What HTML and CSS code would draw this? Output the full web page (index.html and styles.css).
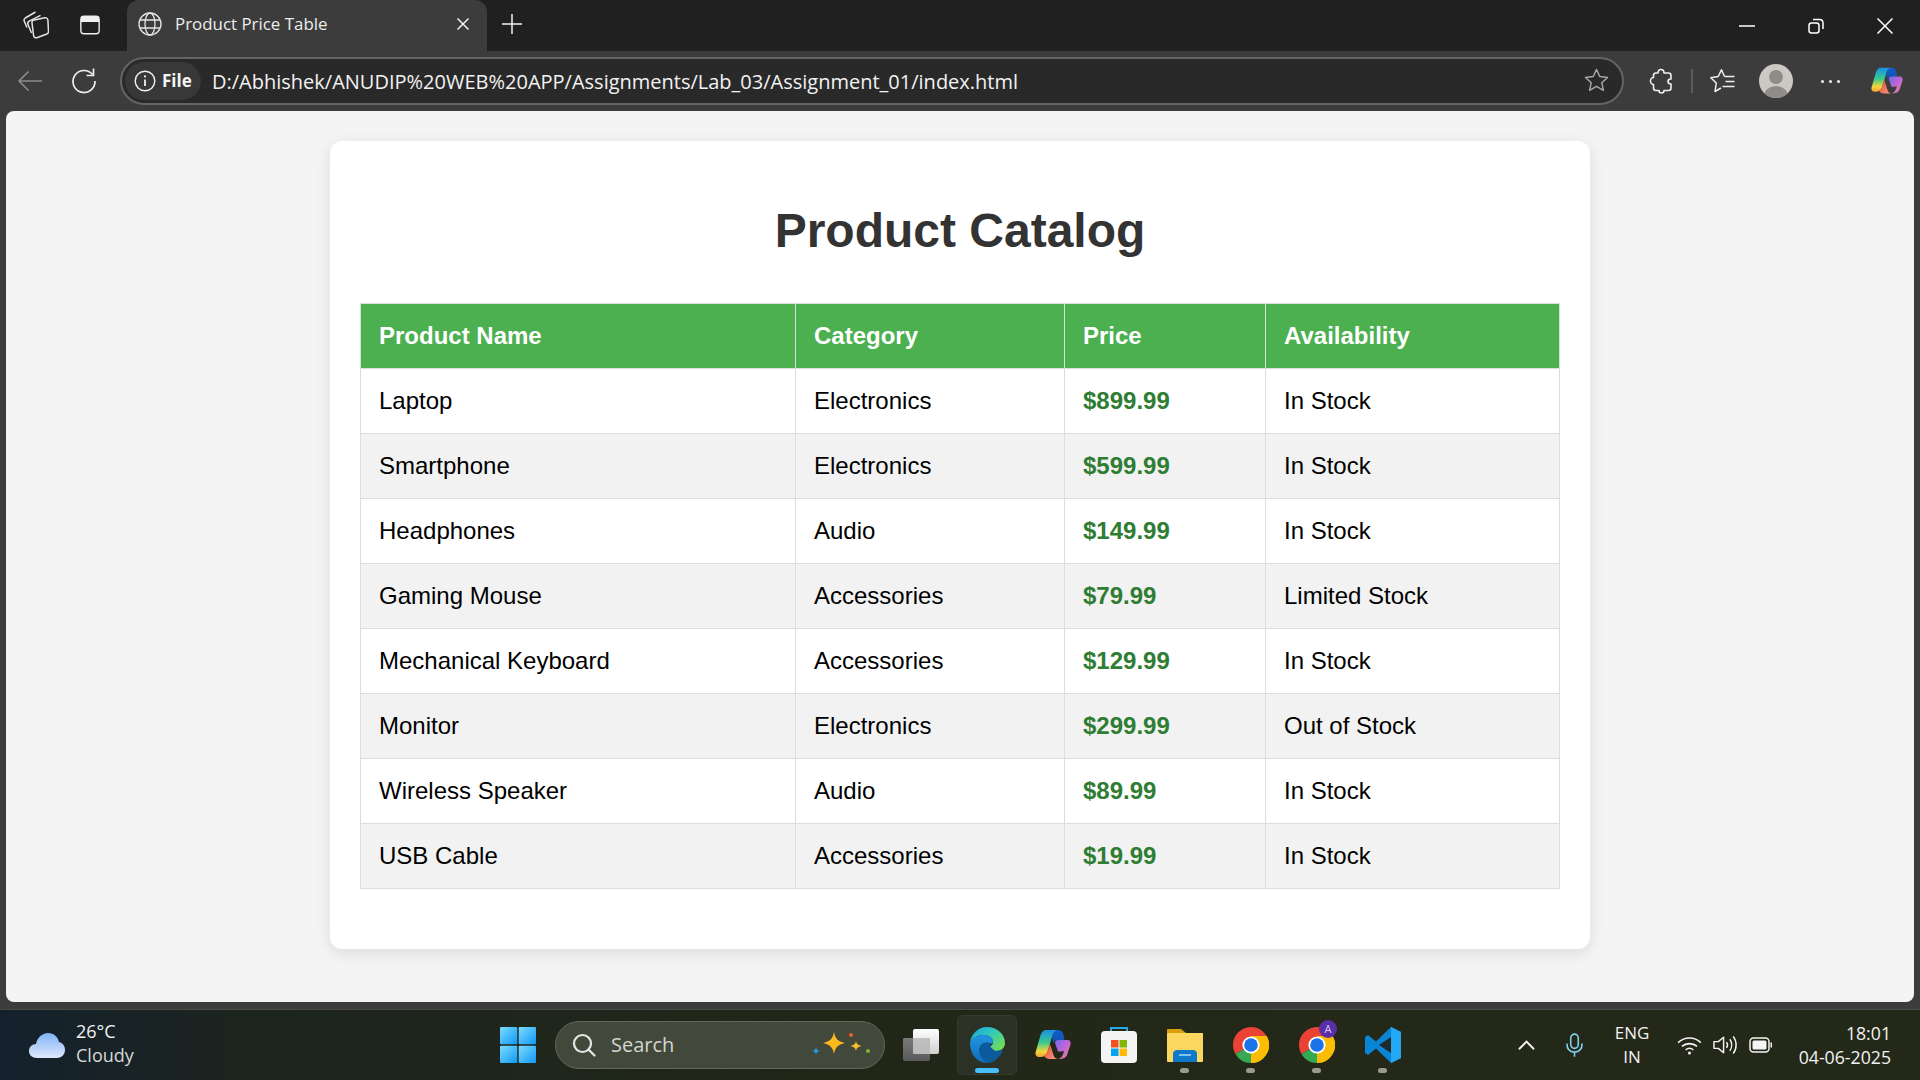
FILE: index.html
```html
<!DOCTYPE html>
<html lang="en">
<head>
<meta charset="utf-8">
<title>Product Price Table</title>
<link rel="stylesheet" href="styles.css">
</head>
<body>
<svg class="defs" width="0" height="0" aria-hidden="true">
  <defs>
    <linearGradient id="copA" x1="0" y1="0" x2="0" y2="1"><stop offset="0" stop-color="#1b8ee8"/><stop offset=".45" stop-color="#35c98f"/><stop offset=".8" stop-color="#f4d53c"/><stop offset="1" stop-color="#f0a030"/></linearGradient>
    <linearGradient id="copB" x1="0" y1="0" x2="1" y2="1"><stop offset="0" stop-color="#6f6be8"/><stop offset=".5" stop-color="#c264d8"/><stop offset="1" stop-color="#f48a8a"/></linearGradient>
    <linearGradient id="copC" x1="0" y1="0" x2="0" y2="1"><stop offset="0" stop-color="#0f5fc8"/><stop offset="1" stop-color="#1450b0"/></linearGradient>
    <linearGradient id="copD" x1="0" y1="0" x2="1" y2="1"><stop offset="0" stop-color="#e8452e"/><stop offset="1" stop-color="#f6a08a"/></linearGradient>
    <linearGradient id="edgeA" x1="0" y1="0" x2="1" y2=".7"><stop offset="0" stop-color="#1aa0dc"/><stop offset=".5" stop-color="#2fc8c0"/><stop offset="1" stop-color="#6fdc5c"/></linearGradient>
    <linearGradient id="edgeB" x1="0" y1="0" x2="0" y2="1"><stop offset="0" stop-color="#2196e0"/><stop offset="1" stop-color="#0f6cbc"/></linearGradient>
    <linearGradient id="winA" x1="0" y1="0" x2="1" y2="1"><stop offset="0" stop-color="#7cdcfc"/><stop offset="1" stop-color="#1098f8"/></linearGradient>
    <linearGradient id="weatherA" x1="0" y1="0" x2="0" y2="1"><stop offset="0" stop-color="#7fb4f6"/><stop offset=".6" stop-color="#b9d2fa"/><stop offset="1" stop-color="#dfe9fb"/></linearGradient>
    <linearGradient id="taskA" x1="0" y1="0" x2="0" y2="1"><stop offset="0" stop-color="#ffffff"/><stop offset="1" stop-color="#d0d0d0"/></linearGradient>
    <linearGradient id="taskB" x1="0" y1="0" x2="0" y2="1"><stop offset="0" stop-color="#7a7a7a"/><stop offset="1" stop-color="#5a5a5a"/></linearGradient>
    <symbol id="copilot" viewBox="0 0 36 36">
      <path d="M11 3h12c-3 1-5 3-6 7l-4 13c-1 4-3 7-7 7H4c-2.500 0-4-2-3.500-4.500L5 10c1-4 3-7 6-7z" fill="url(#copA)"/>
      <path d="M23 3c3 0 5 2 5.500 5l1 5h-7c-2 0-3 1-4 3l-1.500-6c1-4 3-7 6-7z" fill="url(#copC)"/>
      <path d="M13 23l2-6 3.500 11c.7 2.500 2.500 4 5 4H15c-3 0-6-2-6-4 2 0 3-2 4-5z" fill="url(#copD)"/>
      <path d="M23 13h9.500c2.500 0 3.500 2 3 4.500l-3 9c-1 4-4 5.500-8 5.500h-1c3-1 4-3 5-6l.5-2-3 .5h-3L20 16c.3-2 1-3 3-3z" fill="url(#copB)"/>
    </symbol>
    <symbol id="chrome" viewBox="-18 -18 36 36">
      <path d="M0 0L-15.600 9A18 18 0 0 1 15.600 -9Z" fill="#ea4335"/>
      <path d="M0 0L15.600 -9A18 18 0 0 1 0 18Z" fill="#fbbc04"/>
      <path d="M0 0L0 18A18 18 0 0 1 -15.600 9Z" fill="#34a853"/>
      <path d="M0 -9H15.600A18 18 0 0 1 0 18L7.800 4.500Z" fill="#fbbc04"/>
      <circle r="8.600" fill="#fff"/><circle r="6.800" fill="#1a73e8"/>
    </symbol>
  </defs>
</svg>
<div class="app">
  <header class="titlebar">
    <div class="title-left">
      <svg class="ico ico-workspaces" viewBox="0 0 26 28" fill="none" stroke="#e4e4e4" stroke-width="1.500" stroke-linejoin="round"><path d="M10.200 9.200l11.500-2.400c1.700-.3 3 .7 3.200 2.300l.6 11c.1 1.500-.8 2.800-2.300 3.200l-9.400 3.400c-1.700.5-3-.5-3.200-2.100L9 11.800c-.1-1.300.3-2.300 1.200-2.600z"/><path d="M8.500 22L5 13.500c-.6-1.400-.1-2.600 1.200-3.300L17.500 4.300"/><path d="M4 16.500L1.300 10.300c-.6-1.400-.2-2.500 1-3.300L12.500 1"/></svg>
      <svg class="ico ico-tabs" viewBox="0 0 24 24" fill="none" stroke="#f0f0f0" stroke-width="1.500"><rect x="2" y="2.500" width="20" height="19" rx="3.500"/><path d="M2 8h20M3 3.500h18V8H3z" fill="#f0f0f0"/></svg>
    </div>
    <div class="tab">
      <svg class="ico ico-globe" viewBox="0 0 24 24" fill="none" stroke="#e4e4e4" stroke-width="1.300"><circle cx="12" cy="12" r="11"/><ellipse cx="12" cy="12" rx="5" ry="11"/><path d="M1.800 8h20.400M1.800 16h20.400"/></svg>
      <span class="tab-title">Product Price Table</span>
      <svg class="ico ico-close" viewBox="0 0 14 14" fill="none" stroke="#f0f0f0" stroke-width="1.500"><path d="M1.500 1.500l11 11M12.500 1.500l-11 11"/></svg>
    </div>
    <svg class="ico ico-plus" viewBox="0 0 22 22" fill="none" stroke="#f0f0f0" stroke-width="1.500"><path d="M11 1v20M1 11h20"/></svg>
    <div class="win-controls">
      <svg class="ico win-ico" viewBox="0 0 16 16" fill="none" stroke="#fff" stroke-width="1.500"><path d="M0 8h16"/></svg>
      <svg class="ico win-ico" viewBox="0 0 16 16" fill="none" stroke="#fff" stroke-width="1.500"><rect x="1" y="5" width="10" height="10" rx="2.500"/><path d="M5 1.500h6.500c2 0 3.500 1.500 3.500 3.500v6"/></svg>
      <svg class="ico win-ico" viewBox="0 0 16 16" fill="none" stroke="#fff" stroke-width="1.500"><path d="M.5.500l15 15M15.500.500l-15 15"/></svg>
    </div>
  </header>

  <nav class="toolbar">
    <svg class="ico ico-back" viewBox="0 0 26 22" fill="none" stroke="#8c8c8c" stroke-width="1.600"><path d="M25 11H2M11.500 1.500L2 11l9.500 9.500"/></svg>
    <svg class="ico ico-reload" viewBox="0 0 26 26" fill="none" stroke="#efefef" stroke-width="1.700"><path d="M21.500 6.500A11 11 0 1 0 24 13"/><path d="M22.500 .5v7h-7"/></svg>
    <div class="omnibox">
      <div class="site-pill">
        <svg class="ico ico-info" viewBox="0 0 22 22" fill="none" stroke="#f0f0f0" stroke-width="1.400"><circle cx="11" cy="11" r="9.800"/><path d="M11 9.500v6.500" stroke-width="1.800"/><circle cx="11" cy="6.400" r="1.100" fill="#f0f0f0" stroke="none"/></svg>
        <span class="pill-label">File</span>
      </div>
      <span class="url">D:/Abhishek/ANUDIP%20WEB%20APP/Assignments/Lab_03/Assignment_01/index.html</span>
      <svg class="ico ico-star" viewBox="0 0 26 26" fill="none" stroke="#a8a8a8" stroke-width="1.500" stroke-linejoin="round"><path d="M13 1.500l3.400 7.400 8.100.9-6 5.500 1.700 8-7.200-4.100-7.200 4.100 1.700-8-6-5.500 8.100-.9z"/></svg>
    </div>
    <svg class="ico ico-ext" viewBox="0 0 24 26" fill="none" stroke="#f0f0f0" stroke-width="1.600" stroke-linejoin="round"><path d="M9 5c0-2 1-3.500 3-3.500S15 3 15 5h4.500c1.500 0 2.500 1 2.500 2.500V11c-2 0-3 1-3 2.500s1 2.500 3 2.500v4c0 1.500-1 2.500-2.500 2.500H15c0 1.500-1 2.500-2.500 2.500S10 24 10 22.500H7c-1.500 0-2.500-1-2.500-2.500v-3.500C3 16.500 1.500 15 1.500 13S3 9.500 4.500 9.500V7.500C4.500 6 5.500 5 7 5z"/></svg>
    <span class="tool-divider"></span>
    <svg class="ico ico-favs" viewBox="0 0 25 25" fill="none" stroke="#f0f0f0" stroke-width="1.500" stroke-linejoin="round"><path d="M14.500 7.500L11.500.8 8.200 7.500.8 8.700 6.300 14 5 22.500 11 19"/><path d="M14.500 7.500H24.500M15.500 12.500H24.500M12.500 17.500H24.500"/></svg>
    <div class="avatar"><span class="avatar-head"></span><span class="avatar-body"></span></div>
    <span class="more"><i></i><i></i><i></i></span>
    <svg class="ico ico-copilot"><use href="#copilot"/></svg>
  </nav>

  <main class="viewport">
    <section class="card">
      <h1 class="card-title">Product Catalog</h1>
      <table class="catalog">
        <colgroup><col class="col-name"><col class="col-cat"><col class="col-price"><col class="col-avail"></colgroup>
        <thead>
          <tr><th>Product Name</th><th>Category</th><th>Price</th><th>Availability</th></tr>
        </thead>
        <tbody>
          <tr><td>Laptop</td><td>Electronics</td><td class="price">$899.99</td><td>In Stock</td></tr>
          <tr><td>Smartphone</td><td>Electronics</td><td class="price">$599.99</td><td>In Stock</td></tr>
          <tr><td>Headphones</td><td>Audio</td><td class="price">$149.99</td><td>In Stock</td></tr>
          <tr><td>Gaming Mouse</td><td>Accessories</td><td class="price">$79.99</td><td>Limited Stock</td></tr>
          <tr><td>Mechanical Keyboard</td><td>Accessories</td><td class="price">$129.99</td><td>In Stock</td></tr>
          <tr><td>Monitor</td><td>Electronics</td><td class="price">$299.99</td><td>Out of Stock</td></tr>
          <tr><td>Wireless Speaker</td><td>Audio</td><td class="price">$89.99</td><td>In Stock</td></tr>
          <tr><td>USB Cable</td><td>Accessories</td><td class="price">$19.99</td><td>In Stock</td></tr>
        </tbody>
      </table>
    </section>
  </main>

  <footer class="taskbar">
    <div class="weather">
      <svg class="ico ico-weather" viewBox="0 0 38 28"><path d="M9 27C4 27 1 24 1 20s3-7 7-7c1-6 6-11 12-11s10 4 11 9c4 1 6 4 6 8s-3 8-8 8z" fill="url(#weatherA)"/></svg>
      <div class="weather-text"><span class="temp">26°C</span><span class="cond">Cloudy</span></div>
    </div>
    <svg class="ico ico-win" viewBox="0 0 36 36"><rect x="0" y="0" width="17.300" height="17.300" rx="1" fill="url(#winA)"/><rect x="18.700" y="0" width="17.300" height="17.300" rx="1" fill="url(#winA)"/><rect x="0" y="18.700" width="17.300" height="17.300" rx="1" fill="url(#winA)"/><rect x="18.700" y="18.700" width="17.300" height="17.300" rx="1" fill="url(#winA)"/></svg>
    <div class="search">
      <svg class="ico ico-search" viewBox="0 0 24 24" fill="none" stroke="#e8e8e8" stroke-width="2.200"><circle cx="10.500" cy="10.500" r="8.500"/><path d="M16.500 16.500l6 6" stroke-linecap="round"/></svg>
      <span class="search-label">Search</span>
      <svg class="ico ico-spark" viewBox="0 0 60 30"><path d="M24 2c1.500 7 3.500 9 11 11-7.500 2-9.500 4-11 11-1.500-7-3.500-9-11-11 7.500-2 9.500-4 11-11z" fill="#fbb91f"/><path d="M46 11c.7 3 1.500 4 5.500 5-4 1-4.800 2-5.500 5-.7-3-1.500-4-5.500-5 4-1 4.800-2 5.500-5z" fill="#fbc02d"/><path d="M6 17c.5 2.500 1 3 3.500 4-2.500 1-3 1.500-3.500 4-.5-2.500-1-3-3.500-4 2.500-1 3-1.500 3.500-4z" fill="#1ea0e8"/><circle cx="41" cy="5" r="2" fill="#e8622a"/><circle cx="58" cy="21" r="2" fill="#7cb82f"/></svg>
    </div>
    <div class="pinned">
      <div class="pin">
        <svg class="app-ico" viewBox="0 0 36 36"><rect x="10" y="2" width="26" height="25" rx="2" fill="url(#taskA)"/><path d="M1 11h9v16h17v5a2 2 0 0 1-2 2H2a2 2 0 0 1-2-2V12z" fill="url(#taskB)"/><rect x="10" y="11" width="17" height="16" fill="#b4b4b4" opacity=".8"/></svg>
      </div>
      <div class="pin pin-active">
        <svg class="app-ico" viewBox="0 0 36 36"><path d="M1 16C2 7 9 0 18 0c10 0 18 7 18 16 0 5-4 8-9 8-4 0-6-1-6-3 0-3 3-2 3-6 0-4-4-7-9-7C8 8 3 11 1 16z" fill="url(#edgeA)"/><path d="M1 16c2-5 7-8 14-8 5 0 9 3 9 7 0 1-1 1-2 2-3-2-9-2-11 3-2 6 2 13 9 16-10 1-19-7-19-20z" fill="url(#edgeB)"/><path d="M11 20c2-5 8-5 11-3-2 1-1 4 5 7 3 0 6-1 7-2-2 8-9 14-16 14-5-3-9-10-7-16z" fill="#0c5a9e"/></svg>
        <span class="pin-bar"></span>
      </div>
      <div class="pin"><svg class="app-ico"><use href="#copilot"/></svg></div>
      <div class="pin">
        <svg class="app-ico" viewBox="0 0 36 36"><path d="M10 5V1h16v4" fill="none" stroke="#2aa8e8" stroke-width="2"/><rect x="0" y="4" width="36" height="32" rx="4" fill="#f4f4f4"/><rect x="10" y="13" width="7.500" height="7.500" fill="#f25022"/><rect x="18.500" y="13" width="7.500" height="7.500" fill="#7fba00"/><rect x="10" y="21.500" width="7.500" height="7.500" fill="#00a4ef"/><rect x="18.500" y="21.500" width="7.500" height="7.500" fill="#ffb900"/></svg>
      </div>
      <div class="pin">
        <svg class="app-ico" viewBox="0 0 36 36"><path d="M0 3a1 1 0 0 1 1-1h13l5 4h16a1 1 0 0 1 1 1v10H0z" fill="#d9a00c"/><rect x="0" y="6" width="36" height="29" rx="1" fill="#fcd75f"/><path d="M6 35v-8c0-3 2-4 4-4h16c2 0 4 1 4 4v8z" fill="#0f78c8"/><rect x="12" y="27" width="12" height="2" fill="#7cc4f4"/></svg>
        <span class="pin-dot"></span>
      </div>
      <div class="pin"><svg class="app-ico"><use href="#chrome"/></svg><span class="pin-dot"></span></div>
      <div class="pin">
        <svg class="app-ico"><use href="#chrome"/></svg>
        <span class="badge">A</span>
        <span class="pin-dot"></span>
      </div>
      <div class="pin">
        <svg class="app-ico" viewBox="0 0 36 36"><path d="M26 0l10 5v26l-10 5-15-14.500L3 28l-3-2V10l3-2 8 6.500z" fill="#0a84d4"/><path d="M26 0l10 5v26l-10 5z" fill="#22a8f4"/><path d="M26 10L14 18l12 8z" fill="#20282a"/></svg>
        <span class="pin-dot"></span>
      </div>
    </div>
    <div class="tray">
      <svg class="ico tray-chev" viewBox="0 0 18 12" fill="none" stroke="#f4f4f4" stroke-width="2"><path d="M1 10.500l8-8 8 8"/></svg>
      <svg class="ico tray-mic" viewBox="0 0 18 26" fill="none" stroke="#7fd0ee" stroke-width="1.700"><rect x="5" y="1" width="8" height="15" rx="4"/><path d="M1 11c0 6 3 9 8 9s8-3 8-9M9 20v5"/></svg>
      <div class="lang"><span>ENG</span><span>IN</span></div>
      <svg class="ico tray-wifi" viewBox="0 0 26 20" fill="none" stroke="#f4f4f4" stroke-width="1.700"><path d="M1 7c7-6.500 17-6.500 24 0M5 11c4.500-4 11.500-4 16 0M9 14.500c2.500-2 5.500-2 8 0"/><circle cx="13" cy="18" r="1.600" fill="#f4f4f4" stroke="none"/></svg>
      <svg class="ico tray-vol" viewBox="0 0 26 22" fill="none" stroke="#f4f4f4" stroke-width="1.500" stroke-linejoin="round"><path d="M1 7.500h4.500L11 3v16l-5.500-4.500H1z"/><path d="M14 8c1.500 2 1.500 4 0 6M17.500 5c2.500 3.500 2.500 8.500 0 12M21 2c4 5 4 13 0 18"/></svg>
      <svg class="ico tray-batt" viewBox="0 0 24 16" fill="none"><rect x="1" y="1" width="19" height="14" rx="3.500" stroke="#f4f4f4" stroke-width="1.500"/><rect x="3.500" y="3.500" width="14" height="9" rx="1.500" fill="#f4f4f4"/><path d="M21.500 5.500h1.500v5h-1.500z" fill="#f4f4f4"/></svg>
      <div class="clock"><span>18:01</span><span>04-06-2025</span></div>
    </div>
  </footer>
</div>
</body>
</html>
```

FILE: styles.css
```css
* { box-sizing: border-box; }
html, body { margin: 0; padding: 0; height: 100%; }
body { overflow: hidden; background: #3c3c3c; font-family: "Open Sans", "Noto Sans", sans-serif; }
.defs { position: absolute; }
.ico { display: block; flex: none; }
.app { display: flex; flex-direction: column; height: 1080px; }

/* title bar */
.titlebar { height: 51px; flex: none; display: flex; align-items: flex-start; background: #202020; color: #f0f0f0; }
.title-left { width: 127px; height: 51px; display: flex; align-items: center; padding: 0 0 2px 23px; }
.ico-workspaces { width: 26px; height: 28px; }
.ico-tabs { width: 22px; height: 22px; margin-left: 30px; }
.tab { width: 360px; height: 51px; display: flex; align-items: center; padding: 0 17px 3px 11px; background: #3c3c3c; border-radius: 12px 12px 0 0; }
.ico-globe { width: 24px; height: 24px; }
.tab-title { margin: -2px 0 0 13px; flex: 1; font-size: 16.900px; color: #ececec; white-space: nowrap; }
.ico-close { width: 14px; height: 14px; }
.ico-plus { width: 22px; height: 22px; margin: 13px 0 0 14px; }
.win-controls { margin-left: auto; display: flex; align-items: center; gap: 53px; height: 51px; padding: 0 27px 0 0; }
.win-ico { width: 16px; height: 16px; }

/* toolbar */
.toolbar { height: 60px; flex: none; display: flex; align-items: center; background: #3c3c3c; padding: 0 0 0 17px; }
.ico-back { width: 26px; height: 22px; }
.ico-reload { width: 26px; height: 26px; margin-left: 28px; }
.omnibox { width: 1504px; height: 48px; margin: -1px 0 0 23px; display: flex; align-items: center; padding: 0 13px 0 3px; border: 2px solid #646464; border-radius: 24px; background: #292929; }
.site-pill { height: 38px; width: 76px; display: flex; align-items: center; padding-left: 9px; gap: 6px; border-radius: 19px; background: #383838; }
.ico-info { width: 22px; height: 22px; }
.pill-label { font-size: 17px; font-weight: 700; color: #f4f4f4; }
.url { margin: 2px 0 0 11px; flex: 1; font-size: 20px; color: #f2f2f2; white-space: nowrap; }
.ico-star { width: 25px; height: 25px; }
.ico-ext { width: 24px; height: 26px; margin-left: 25px; }
.tool-divider { width: 2px; height: 24px; margin-left: 18px; background: #5c5c5c; }
.ico-favs { width: 25px; height: 25px; margin-left: 17px; }
.avatar { position: relative; width: 34px; height: 34px; margin-left: 24px; border-radius: 50%; overflow: hidden; background: #ccc9c5; }
.avatar-head { position: absolute; left: 10px; top: 6px; width: 14px; height: 14px; border-radius: 50%; background: #8f8c88; }
.avatar-body { position: absolute; left: 5px; top: 22px; width: 24px; height: 20px; border-radius: 50%; background: #8f8c88; }
.more { display: flex; gap: 5px; margin-left: 28px; }
.more i { width: 3px; height: 3px; border-radius: 50%; background: #f0f0f0; }
.ico-copilot { width: 34px; height: 32px; margin-left: 30px; }

/* viewport */
.viewport { height: 891px; flex: none; margin: 0 6px; display: flex; justify-content: center; padding-top: 30px; background: #f4f4f4; border-radius: 8px; }
.card { width: 1260px; height: 808px; padding: 30px; background: #fff; border-radius: 12px; box-shadow: 0 4px 15px rgba(0, 0, 0, .1); }
.card-title { margin: 32px 0 44px; text-align: center; font: 700 48px/56px "Liberation Sans", Arial, sans-serif; color: #333; }
.catalog { width: 1199px; table-layout: fixed; border-collapse: collapse; font: 24px/28px "Liberation Sans", Arial, sans-serif; color: #000; }
.col-name { width: 435px; }
.col-cat { width: 269px; }
.col-price { width: 201px; }
.col-avail { width: 294px; }
.catalog th, .catalog td { height: 65px; padding: 0 18px; text-align: left; border: 1px solid #ddd; }
.catalog th { background: #4caf50; color: #fff; font-weight: 700; }
.catalog tbody tr:nth-child(even) { background: #f2f2f2; }
.catalog .price { color: #2e7d32; font-weight: 700; }

/* taskbar */
.taskbar { position: relative; height: 71px; flex: none; margin-top: 7px; display: flex; align-items: center; color: #f2f2f2; border-top: 1px solid #484c42; background: linear-gradient(90deg, #14212d 0, #1c2420 12%, #212718 40%, #232818 70%, #232818 100%); }
.weather { width: 500px; display: flex; align-items: center; padding-left: 28px; }
.ico-weather { width: 38px; height: 28px; }
.weather-text { margin: -4px 0 0 10px; display: flex; flex-direction: column; font-size: 18px; line-height: 24px; }
.cond { color: #d8d8d8; }
.ico-win { width: 36px; height: 36px; margin-top: -1px; }
.search { width: 330px; height: 48px; margin-left: 19px; display: flex; align-items: center; padding: 0 14px 0 16px; border: 1px solid #62675a; border-radius: 24px; background: #42493a; }
.ico-search { width: 24px; height: 24px; }
.search-label { margin: -2px 0 0 15px; flex: 1; font-size: 20px; color: #d4d6d0; }
.ico-spark { width: 60px; height: 30px; }
.pinned { display: flex; margin-left: 3px; }
.pin { position: relative; width: 66px; height: 60px; display: flex; align-items: center; justify-content: center; }
.pin-active::before { content: ""; position: absolute; inset: 0 3px; border-radius: 6px; background: #2c3126; border: 1px solid #363b30; }
.app-ico { position: relative; width: 36px; height: 36px; display: block; }
.pin-bar { position: absolute; left: 21px; bottom: 2px; width: 24px; height: 5px; border-radius: 3px; background: #48bdf8; }
.pin-dot { position: absolute; left: 28px; bottom: 2px; width: 9px; height: 5px; border-radius: 3px; background: #9a9a92; }
.badge { position: absolute; left: 35px; top: 5px; width: 18px; height: 18px; border-radius: 50%; background: #5a2ea8; color: #d8c8f4; font-size: 11px; line-height: 18px; text-align: center; }
.tray { flex: 1; display: flex; align-items: center; padding-right: 29px; }
.tray-chev { width: 17px; height: 12px; margin-left: 102px; }
.tray-mic { width: 17px; height: 25px; margin-left: 31px; }
.lang { width: 50px; margin-left: 24px; display: flex; flex-direction: column; align-items: center; font-size: 17px; line-height: 24px; }
.tray-wifi { width: 25px; height: 19px; margin-left: 20px; }
.tray-vol { width: 25px; height: 22px; margin-left: 11px; }
.tray-batt { width: 24px; height: 16px; margin-left: 11px; }
.clock { margin-left: auto; display: flex; flex-direction: column; align-items: flex-end; font-size: 17.700px; line-height: 24px; }
```
